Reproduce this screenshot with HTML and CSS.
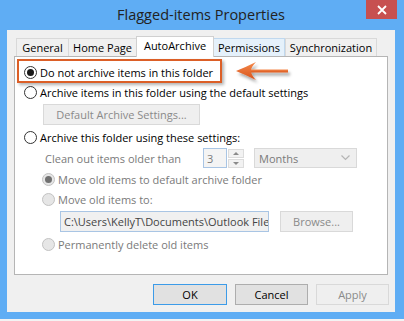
FILE: index.html
```html
<!DOCTYPE html>
<html lang="en">
<head>
    <meta charset="UTF-8">
    <title>Flagged-items Properties</title>
    <link rel="stylesheet" href="styles.css">
</head>
<body>

    <div class="window">
        <!-- title bar -->
        <div class="title-bar">
            <span class="title">Flagged-items Properties</span>
            <span class="close-btn">
                <svg width="10" height="10" viewBox="0 0 10 10"><path d="M1 1 L9 9 M9 1 L1 9" stroke="#fff" stroke-width="1.8"/></svg>
            </span>
        </div>

        <div class="client">
            <!-- tabs -->
            <div class="tabs">
                <div class="tab tab-general">General</div>
                <div class="tab tab-home">Home Page</div>
                <div class="tab tab-auto selected">AutoArchive</div>
                <div class="tab tab-perm hover">Permissions</div>
                <div class="tab tab-sync">Synchronization</div>
            </div>

            <div class="panel">
                <div class="row">
                    <span class="radio checked"></span>
                    <span class="label">Do not archive items in this folder</span>
                </div>
                <div class="row">
                    <span class="radio"></span>
                    <span class="label">Archive items in this folder using the default settings</span>
                </div>
                <div class="row-btn">
                    <span class="btn disabled btn-default">Default Archive Settings...</span>
                </div>
                <div class="row row-3">
                    <span class="radio"></span>
                    <span class="label">Archive this folder using these settings:</span>
                </div>

                <div class="row clean-row">
                    <span class="label grey clean-label">Clean out items older than</span>
                    <span class="num-box">3</span>
                    <span class="spin">
                        <span class="spin-up"></span>
                        <span class="spin-down"></span>
                    </span>
                    <span class="select">
                        <span>Months</span>
                        <svg width="9" height="6" viewBox="0 0 9 6"><path d="M0.5 0.5 L4.5 4.5 L8.5 0.5" fill="none" stroke="#b5b5b5" stroke-width="1.2"/></svg>
                    </span>
                </div>

                <div class="row sub row-move1">
                    <span class="radio disabled checked"></span>
                    <span class="label grey">Move old items to default archive folder</span>
                </div>
                <div class="row sub row-move2">
                    <span class="radio disabled"></span>
                    <span class="label grey">Move old items to:</span>
                </div>
                <div class="path-row">
                    <span class="path-box">C:\Users\KellyT\Documents\Outlook File</span>
                    <span class="btn disabled btn-browse">Browse...</span>
                </div>
                <div class="row sub row-delete">
                    <span class="radio disabled"></span>
                    <span class="label grey">Permanently delete old items</span>
                </div>

                <!-- annotation -->
                <div class="highlight"></div>
                <svg class="arrow" width="64" height="30" viewBox="0 0 64 30">
                    <defs>
                        <linearGradient id="og" x1="0" y1="0" x2="0" y2="1">
                            <stop offset="0" stop-color="#f4894a"/>
                            <stop offset="1" stop-color="#d8531c"/>
                        </linearGradient>
                        <filter id="sh" x="-20%" y="-30%" width="150%" height="190%">
                            <feDropShadow dx="2" dy="3" stdDeviation="1.6" flood-color="#000" flood-opacity="0.35"/>
                        </filter>
                    </defs>
                    <g filter="url(#sh)">
                        <rect x="18" y="11.5" width="38" height="3" fill="url(#og)"/>
                        <path d="M4 13 Q14 9 24 4 Q19 9 19 13 Q19 17 24 22 Q14 17 4 13 Z" fill="url(#og)"/>
                    </g>
                </svg>
            </div>

            <div class="footer">
                <span class="btn btn-ok">OK</span>
                <span class="btn">Cancel</span>
                <span class="btn disabled">Apply</span>
            </div>
        </div>
    </div>

</body>
</html>
```

FILE: styles.css
```css
body {
    margin: 0;
    background: #f3f3f3;
    font-family: "Open Sans", "Noto Sans", sans-serif;
    font-size: 11px;
    color: #000;
}

/* window frame */
.window {
    width: 404px;
    height: 319px;
    background: #5fadf4;
    box-sizing: border-box;
    padding: 0 9px 7px 7px;
    display: flex;
    flex-direction: column;
}

.title-bar {
    position: relative;
    height: 30px;
    display: flex;
    justify-content: center;
    align-items: center;
}

.title {
    font-size: 14.5px;
    color: #222;
    margin-top: -1px;
}

.close-btn {
    position: absolute;
    top: 0;
    right: -2px;
    width: 31px;
    height: 19px;
    background: #c75050;
    display: flex;
    justify-content: center;
    align-items: center;
}

/* dialog body */
.client {
    flex: 1;
    background: #f0f0f0;
    padding: 6px 6px 0 7px;
    display: flex;
    flex-direction: column;
}

.tabs {
    display: flex;
    align-items: flex-end;
    height: 20px;
    margin-left: 2px;
    position: relative;
    z-index: 2;
}

.tab {
    box-sizing: border-box;
    height: 18px;
    border: 1px solid #d9d9d9;
    border-bottom: none;
    background: #f0f0f0;
    display: flex;
    justify-content: center;
    align-items: center;
    margin-right: -1px;
}

.tab-general { width: 53px; }
.tab-home { width: 69px; }
.tab-auto { width: 78px; }
.tab-perm { width: 72px; }
.tab-sync { width: 92px; }

.tab.selected {
    height: 21px;
    background: #fff;
    border-color: #d0d0d0;
    margin-bottom: -1px;
    padding-bottom: 3px;
    position: relative;
    z-index: 3;
}

.tab.hover {
    background: #e5f1fb;
    border-color: #c0d8ee;
    margin-right: 0;
}

.panel {
    position: relative;
    width: 374px;
    height: 219px;
    box-sizing: border-box;
    border: 1px solid #b5b5b5;
    background: #fff;
    padding: 5px 0 0 9px;
    display: flex;
    flex-direction: column;
}

.row {
    display: flex;
    align-items: center;
    height: 20px;
}

.row .label {
    margin-left: 3px;
}

.grey {
    color: #7a7a7a;
}

.row-3 { margin-top: 2px; }

.sub { margin-left: 18px; }
.row-move1 { margin-top: 2px; height: 19px; }
.row-delete { margin-top: 2px; }

/* radio buttons */
.radio {
    width: 13px;
    height: 13px;
    box-sizing: border-box;
    border: 1px solid #333;
    border-radius: 50%;
    background: #fff;
    display: flex;
    justify-content: center;
    align-items: center;
    flex-shrink: 0;
}

.radio.checked::after {
    content: "";
    width: 7px;
    height: 7px;
    border-radius: 50%;
    background: #1a1a1a;
}

.radio.disabled {
    border-color: #c2c2c2;
    background: #e6e6e6;
}

.radio.disabled.checked::after {
    background: #707070;
}

/* buttons */
.btn {
    box-sizing: border-box;
    height: 21px;
    width: 73px;
    border: 1px solid #adadad;
    background: #e1e1e1;
    display: flex;
    justify-content: center;
    align-items: center;
}

.btn.disabled {
    border-color: #d9d9d9;
    background: #efefef;
    color: #8a8a8a;
}

.btn-ok {
    border-color: #3c9be8;
    width: 74px;
}

.row-btn {
    margin: 2px 0 0 19px;
}

.btn-default {
    width: 157px;
}

/* clean out row */
.clean-row {
    margin: 1px 0 0 18px;
}

.clean-label {
    width: 158px;
}

.num-box {
    box-sizing: border-box;
    width: 24px;
    height: 20px;
    border: 1px solid #a9c5e4;
    background: #f4f4f4;
    color: #7a7a7a;
    padding-left: 3px;
    display: flex;
    align-items: center;
}

.spin {
    display: flex;
    flex-direction: column;
    gap: 1px;
    margin-left: 1px;
    width: 16px;
}

.spin-up, .spin-down {
    box-sizing: border-box;
    height: 9px;
    border: 1px solid #dcdcdc;
    background: #f2f2f2;
    display: flex;
    justify-content: center;
    align-items: center;
}

.spin-up::after {
    content: "";
    border-left: 3px solid transparent;
    border-right: 3px solid transparent;
    border-bottom: 3px solid #8a8a8a;
}

.spin-down::after {
    content: "";
    border-left: 3px solid transparent;
    border-right: 3px solid transparent;
    border-top: 3px solid #8a8a8a;
}

.select {
    box-sizing: border-box;
    width: 103px;
    height: 20px;
    margin-left: 10px;
    border: 1px solid #d9d9d9;
    background: #efefef;
    color: #7a7a7a;
    padding: 0 6px 0 4px;
    display: flex;
    justify-content: space-between;
    align-items: center;
}

/* path row */
.path-row {
    display: flex;
    align-items: center;
    margin: 2px 0 0 36px;
    gap: 11px;
}

.path-box {
    box-sizing: border-box;
    width: 209px;
    height: 21px;
    border: 1px solid #a9c5e4;
    background: #f0f0f0;
    color: #444;
    padding-left: 3px;
    white-space: nowrap;
    overflow: hidden;
    display: flex;
    align-items: center;
}

.btn-browse {
    width: 73px;
}

/* red box and arrow drawn on top */
.highlight {
    position: absolute;
    left: 2px;
    top: 2px;
    width: 205px;
    height: 24px;
    box-sizing: border-box;
    border: 2px solid #dc5f27;
    box-shadow: 2px 2px 3px rgba(0, 0, 0, 0.3);
}

.arrow {
    position: absolute;
    left: 217px;
    top: 1px;
}

.footer {
    display: flex;
    justify-content: flex-end;
    gap: 8px;
    margin-top: 9px;
    margin-right: 0;
}
```
